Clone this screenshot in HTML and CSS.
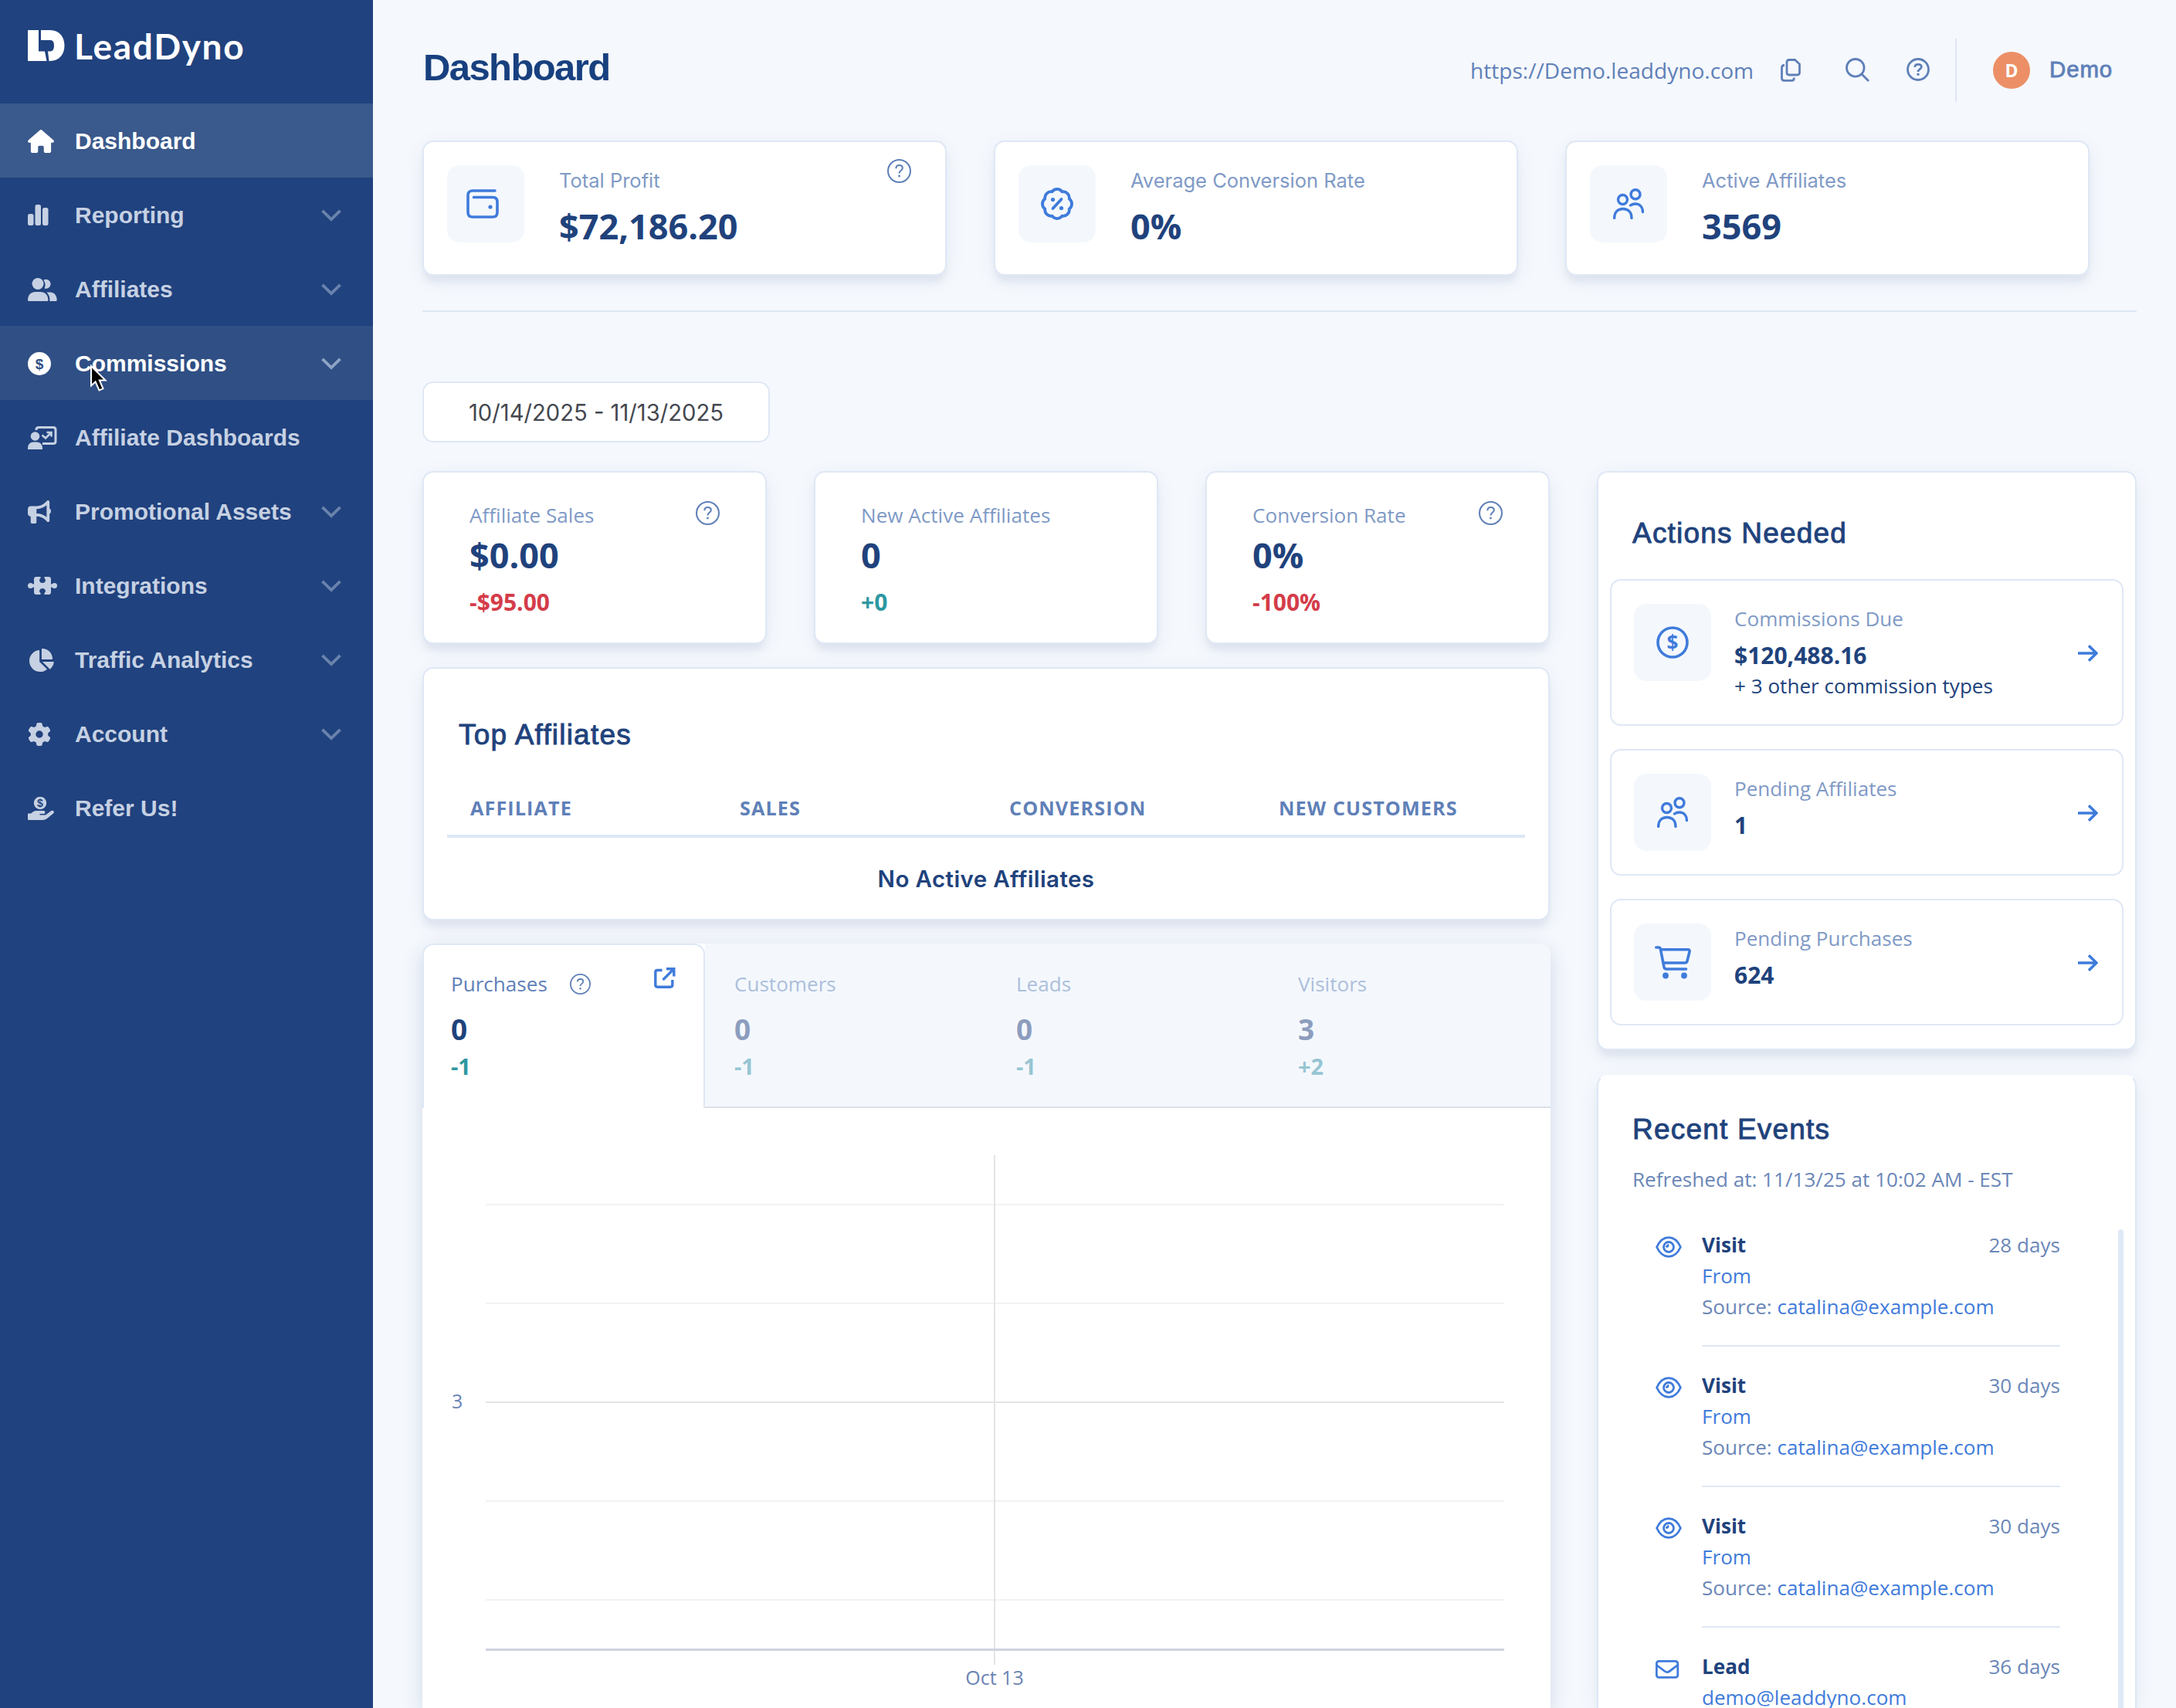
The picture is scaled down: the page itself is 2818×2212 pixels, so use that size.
FILE: index.html
```
<!DOCTYPE html>
<html lang="en">
<head>
    <meta charset="UTF-8">
    <title>LeadDyno - Dashboard</title>
    <link rel="stylesheet" href="styles.css">
</head>
<body>
    <!-- shared icons -->
    <svg class="sprite">
        <symbol id="help" viewBox="0 0 30 30">
            <circle cx="15" cy="15" r="14" fill="none" stroke="currentColor" stroke-width="2"/>
            <path d="M11 11.800C11 9 12.800 7.800 15 7.800C17.500 7.800 19.200 9.200 19.200 11.300C19.200 14.300 15 14.300 15 17.800" fill="none" stroke="currentColor" stroke-width="2"/>
            <circle cx="15" cy="21.300" r="1.400" fill="currentColor"/>
        </symbol>
        <symbol id="chevron" viewBox="0 0 26 16">
            <path d="M1.500 1.800L13 13L24.500 1.800" fill="none" stroke="currentColor" stroke-width="3.800"/>
        </symbol>
        <symbol id="people" viewBox="0 0 40 40">
            <g fill="none" stroke="currentColor" stroke-width="3.400" stroke-linecap="round">
                <circle cx="29" cy="7.700" r="6"/>
                <circle cx="12.500" cy="14.500" r="6"/>
                <path d="M1.600 38.400C1.600 31 6 26.500 12.800 26.500S24 31 24 38.400"/>
                <path d="M22.500 22C24.500 20.500 26.500 20 28.800 20C35 20 38.400 24.500 38.400 30.500"/>
            </g>
        </symbol>
        <symbol id="arrow" viewBox="0 0 26 22">
            <path d="M0 11H24M14 1.300L24 11L14 20.700" fill="none" stroke="currentColor" stroke-width="3.600"/>
        </symbol>
        <symbol id="eye" viewBox="0 0 34 28">
            <g fill="none" stroke="currentColor" stroke-width="2.800">
                <path d="M1.600 14C5 6.500 10.500 1.600 17 1.600S29 6.500 32.400 14C29 21.500 23.500 26.400 17 26.400S5 21.500 1.600 14Z"/>
                <circle cx="17" cy="14" r="6.500"/>
            </g>
            <path d="M12.500 13.500L16.500 9.500L17.500 11.500A3.500 3.500 0 0 1 14.500 15Z" fill="currentColor"/>
        </symbol>
    </svg>

    <aside class="sidebar">
        <div class="logo">
            <svg width="48" height="40" viewBox="0 0 48 40" fill="#fff">
                <path d="M0 0H14V27.500H22L24.500 40H0Z"/>
                <path d="M17 0H29C40.500 0 47.500 8.500 47.500 20S40.500 40 29 40H27.500L26 27.500H29C32.500 27.500 34 24.500 34 20S32.500 13 29 13H17Z"/>
            </svg>
            <span>LeadDyno</span>
        </div>
        <nav>
            <a class="item active">
                <svg width="34" height="30" viewBox="0 0 576 512" fill="currentColor"><path d="M575.8 255.500c0 18-15 32.100-32 32.100h-32l.7 160.200c0 2.700-.2 5.400-.5 8.100V472c0 22.100-17.900 40-40 40H392c-22.100 0-40-17.900-40-40V384c0-17.700-14.300-32-32-32H256c-17.700 0-32 14.300-32 32v88c0 22.100-17.900 40-40 40H104c-22.100 0-40-17.900-40-40V287.600H32c-18 0-32-14-32-32.100c0-9 3-17 10-24L266.400 8c7-7 15-8 22-8s15 2 21 7L564.800 231.500c8 7 12 15 11 24z"/></svg>
                <span>Dashboard</span>
            </a>
            <a class="item">
                <svg width="27" height="27" viewBox="0 0 27 27" fill="currentColor"><rect x="0" y="12" width="7.500" height="15" rx="2.500"/><rect x="9.500" y="0" width="7.500" height="27" rx="2.500"/><rect x="19" y="4" width="7.500" height="23" rx="2.500"/></svg>
                <span>Reporting</span>
                <svg class="chev"><use href="#chevron"/></svg>
            </a>
            <a class="item">
                <svg width="38" height="30" viewBox="0 0 38 30" fill="currentColor"><circle cx="13" cy="7.500" r="7.500"/><path d="M0 28.500C0 22 4.500 18 10 18H16C22 18 26.300 22 26.300 28.500Q26.300 30 25 30H1.300Q0 30 0 28.500Z"/><path d="M20.500 2.700A6 6 0 1 1 21.500 13.500Q24.200 8 20.500 2.700Z"/><path d="M24.500 18.500H29C34 18.500 37.700 22.500 37.700 28.500Q37.700 30 36.300 30H28.300C29 25.500 27.500 21.500 24.500 18.500Z"/></svg>
                <span>Affiliates</span>
                <svg class="chev"><use href="#chevron"/></svg>
            </a>
            <a class="item hover">
                <svg width="30" height="30" viewBox="0 0 30 30"><circle cx="15" cy="15" r="15" fill="currentColor"/><text x="15" y="21.500" text-anchor="middle" class="coin-mark hovered">$</text></svg>
                <span>Commissions</span>
                <svg class="chev"><use href="#chevron"/></svg>
            </a>
            <a class="item">
                <svg width="38" height="30" viewBox="0 0 38 30" fill="currentColor"><circle cx="9.500" cy="13" r="5.800"/><path d="M0 28.500C0 23.500 3 20.500 7.500 20.500H11.500C16 20.500 19 23.500 19 28.500V30H0Z"/><path d="M11 5V4.500Q11 1.500 14 1.500H33Q36 1.500 36 4.500V19.500Q36 22.500 33 22.500H19" fill="none" stroke="currentColor" stroke-width="3"/><path d="M18.500 11.500L23 15.500L29.500 9M24.500 8H30.500V13.500" fill="none" stroke="currentColor" stroke-width="2.600"/></svg>
                <span>Affiliate Dashboards</span>
            </a>
            <a class="item">
                <svg width="30" height="30" viewBox="0 0 512 512" fill="currentColor"><path d="M480 32c0-12.900-7.800-24.600-19.800-29.600s-25.700-2.200-34.900 6.900L381.700 53c-48 48-113.100 75-181 75H64c-35.300 0-64 28.700-64 64v96c0 35.300 28.700 64 64 64v128c0 17.700 14.300 32 32 32h64c17.700 0 32-14.300 32-32V352h8.700c67.900 0 133 27 181 75l43.600 43.600c9.200 9.200 22.900 11.900 34.900 6.900s19.800-16.600 19.800-29.600V300.400c18.600-8.800 32-32.500 32-60.400s-13.400-51.600-32-60.400V32zm-64 76.700V371.300C357.200 317.800 280.500 288 200.700 288H192V192h8.700c79.800 0 156.500-29.800 215.300-83.300z"/></svg>
                <span>Promotional Assets</span>
                <svg class="chev"><use href="#chevron"/></svg>
            </a>
            <a class="item">
                <svg width="38" height="23" viewBox="0 0 38 23" fill="currentColor"><circle cx="3.500" cy="11.500" r="3.500"/><circle cx="34.500" cy="11.500" r="3.500"/><path d="M3 9.500H8V3Q8 0 11 0H16.500V2Q14.500 3.300 15.200 5.500Q16 8 19 8T22.800 5.500Q23.500 3.300 21.500 2V0H27Q30 0 30 3V9.500H35V13.500H30V20Q30 23 27 23H21.500V21Q23.500 19.700 22.800 17.500Q22 15 19 15T15.200 17.500Q14.500 19.700 16.500 21V23H11Q8 23 8 20V13.500H3Z"/></svg>
                <span>Integrations</span>
                <svg class="chev"><use href="#chevron"/></svg>
            </a>
            <a class="item">
                <svg width="34" height="30" viewBox="0 0 576 512" fill="currentColor"><path d="M304 240V16.600c0-9 7-16.600 16-16.600C443.700 0 544 100.300 544 224c0 9-7.600 16-16.600 16H304zM32 272C32 150.700 122.100 50.300 239 34.300c9.200-1.300 17 6.100 17 15.400V288L412.500 444.500c6.700 6.700 6.200 17.700-1.500 23.100C371.800 495.600 323.800 512 272 512C139.500 512 32 404.600 32 272zm526.400 16c9.300 0 16.600 7.800 15.400 17c-7.700 55.900-34.600 105.600-73.900 142.300c-6 5.600-15.400 5.200-21.200-.7L320 288H558.400z"/></svg>
                <span>Traffic Analytics</span>
                <svg class="chev"><use href="#chevron"/></svg>
            </a>
            <a class="item">
                <svg width="30" height="30" viewBox="0 0 512 512" fill="currentColor"><path d="M495.900 166.600c3.200 8.700 .5 18.400-6.400 24.600l-43.300 39.400c1.100 8.300 1.700 16.800 1.700 25.400s-.6 17.100-1.700 25.400l43.300 39.400c6.900 6.200 9.600 15.900 6.400 24.600c-4.400 11.900-9.700 23.300-15.800 34.300l-4.700 8.100c-6.600 11-14 21.400-22.100 31.200c-5.900 7.200-15.700 9.600-24.500 6.800l-55.700-17.700c-13.400 10.300-28.200 18.900-44 25.400l-12.500 57.100c-2 9.100-9 16.300-18.200 17.800c-13.800 2.300-28 3.500-42.500 3.500s-28.700-1.200-42.500-3.500c-9.200-1.500-16.200-8.700-18.200-17.800l-12.500-57.100c-15.800-6.500-30.600-15.100-44-25.400L83.100 425.900c-8.800 2.800-18.600 .3-24.500-6.800c-8.100-9.800-15.500-20.200-22.100-31.200l-4.700-8.100c-6.100-11-11.400-22.400-15.800-34.300c-3.200-8.700-.5-18.400 6.400-24.600l43.300-39.400C64.600 273.100 64 264.600 64 256s.6-17.100 1.700-25.400L22.400 191.200c-6.900-6.200-9.600-15.900-6.400-24.600c4.400-11.900 9.700-23.300 15.800-34.300l4.700-8.100c6.600-11 14-21.400 22.100-31.200c5.900-7.200 15.700-9.600 24.500-6.800l55.700 17.700c13.400-10.300 28.200-18.900 44-25.400l12.500-57.100c2-9.100 9-16.300 18.200-17.800C227.300 1.200 241.500 0 256 0s28.700 1.200 42.500 3.500c9.200 1.500 16.200 8.700 18.200 17.800l12.500 57.100c15.800 6.500 30.600 15.100 44 25.400l55.700-17.700c8.800-2.800 18.600-.3 24.500 6.800c8.100 9.800 15.500 20.200 22.100 31.200l4.700 8.100c6.100 11 11.400 22.400 15.800 34.300zM256 336a80 80 0 1 0 0-160 80 80 0 1 0 0 160z"/></svg>
                <span>Account</span>
                <svg class="chev"><use href="#chevron"/></svg>
            </a>
            <a class="item">
                <svg width="34" height="30" viewBox="0 0 34 30" fill="currentColor"><circle cx="16" cy="8" r="8.200"/><path d="M1 21.500H4L7 19.300Q8.800 18 11 18H20.500Q22.500 18 22.500 20T20.500 22H15.500V23.400H23L30 18.300Q32.200 16.900 33.500 18.500Q34.500 20.300 32.800 21.700L25 28Q22.500 30 19.500 30H1Q0 30 0 29V22.500Q0 21.500 1 21.500Z"/><text x="16" y="13" text-anchor="middle" class="coin-mark small">$</text></svg>
                <span>Refer Us!</span>
            </a>
        </nav>
        <svg class="cursor" width="24" height="38" viewBox="0 0 24 38"><path d="M2 2V27.500L7.600 22.500L12.500 33.500L17.500 31.300L12.800 20.500H20.500Z" fill="#000" stroke="#fff" stroke-width="2"/></svg>
    </aside>

    <main>
        <header class="topbar">
            <h1>Dashboard</h1>
            <span class="url">https://Demo.leaddyno.com</span>
            <svg class="copy" width="26" height="30" viewBox="0 0 26 30" fill="none" stroke="currentColor" stroke-width="2.800"><path d="M11 1.500H18.500L24.500 7V18Q24.500 21 21.500 21H11Q8 21 8 18V4.500Q8 1.500 11 1.500Z"/><path d="M5 8.500H4.500Q1.500 8.500 1.500 11.500V25Q1.500 28.300 4.500 28.300H14.500Q17.300 28.300 17.300 25.500V24.500"/></svg>
            <svg class="search" width="31" height="31" viewBox="0 0 31 31" fill="none" stroke="currentColor" stroke-width="2.800"><circle cx="12.800" cy="12.800" r="11.300"/><path d="M21 21L30 30"/></svg>
            <svg class="top-help" width="30" height="30" viewBox="0 0 30 30" fill="none" stroke="currentColor" stroke-width="2.800"><circle cx="15" cy="15" r="13.500"/><path d="M10.800 12C10.800 9.300 12.500 8.300 15 8.300S19.400 9.500 19.400 11.800C19.400 14.300 15 14.500 15 18"/><circle cx="15" cy="21.300" r="1.700" fill="currentColor" stroke="none"/></svg>
            <span class="sep"></span>
            <span class="avatar">D</span>
            <span class="user">Demo</span>
        </header>

        <section class="stats">
            <div class="card stat">
                <div class="icon-box wallet">
                    <svg width="42" height="38" viewBox="0 0 42 38" fill="none" stroke="currentColor" stroke-width="3.600" stroke-linecap="round"><path d="M37 2H8Q2 2 2 8V30Q2 36 8 36H34Q40 36 40 30V16.500Q40 10.500 34 10.500H9.500"/><circle cx="31" cy="23" r="2.600" fill="currentColor" stroke="none"/></svg>
                </div>
                <div>
                    <div class="stat-label">Total Profit</div>
                    <div class="value">$72,186.20</div>
                </div>
                <svg class="help"><use href="#help"/></svg>
            </div>
            <div class="card stat">
                <div class="icon-box">
                    <svg width="42" height="42" viewBox="0 0 42 42" fill="none" stroke="currentColor" stroke-width="3.800" stroke-linejoin="round" stroke-linecap="round"><path d="M36.700 27.500A8 8 0 0 1 27.500 36.700A8 8 0 0 1 14.500 36.700A8 8 0 0 1 5.300 27.500A8 8 0 0 1 5.300 14.500A8 8 0 0 1 14.500 5.300A8 8 0 0 1 27.500 5.300A8 8 0 0 1 36.700 14.500A8 8 0 0 1 36.700 27.500Z"/><path d="M26.500 15L15.500 27"/><circle cx="15.500" cy="15.500" r="2.600" fill="currentColor" stroke="none"/><circle cx="26.500" cy="26.500" r="2.600" fill="currentColor" stroke="none"/></svg>
                </div>
                <div>
                    <div class="stat-label">Average Conversion Rate</div>
                    <div class="value">0%</div>
                </div>
            </div>
            <div class="card stat">
                <div class="icon-box"><svg width="40" height="40"><use href="#people"/></svg></div>
                <div>
                    <div class="stat-label">Active Affiliates</div>
                    <div class="value">3569</div>
                </div>
            </div>
        </section>

        <hr>

        <div class="date-range">10/14/2025 - 11/13/2025</div>

        <div class="columns">
            <div class="left">
                <section class="metrics">
                    <div class="card metric">
                        <div class="metric-top"><span class="label">Affiliate Sales</span><svg class="help"><use href="#help"/></svg></div>
                        <div class="value">$0.00</div>
                        <div class="delta down">-$95.00</div>
                    </div>
                    <div class="card metric">
                        <div class="metric-top"><span class="label">New Active Affiliates</span></div>
                        <div class="value">0</div>
                        <div class="delta up">+0</div>
                    </div>
                    <div class="card metric">
                        <div class="metric-top"><span class="label">Conversion Rate</span><svg class="help"><use href="#help"/></svg></div>
                        <div class="value">0%</div>
                        <div class="delta down">-100%</div>
                    </div>
                </section>

                <section class="card top-affiliates">
                    <h2>Top Affiliates</h2>
                    <div class="table-head">
                        <span>Affiliate</span>
                        <span>Sales</span>
                        <span>Conversion</span>
                        <span>New Customers</span>
                    </div>
                    <div class="empty">No Active Affiliates</div>
                </section>

                <section class="chart-card">
                    <div class="tabs">
                        <div class="tab selected">
                            <div class="tab-top">
                                <span>Purchases</span>
                                <svg class="help small"><use href="#help"/></svg>
                                <svg class="open" width="28" height="27" viewBox="0 0 28 27" fill="none" stroke="currentColor" stroke-width="3.400"><path d="M10.500 3.500H4.500Q1.800 3.500 1.800 6.200V22.500Q1.800 25.200 4.500 25.200H21Q23.800 25.200 23.800 22.500V16"/><path d="M16 1.800H25.800V11.500M25.500 2L11.500 16"/></svg>
                            </div>
                            <div class="tab-value">0</div>
                            <div class="tab-delta">-1</div>
                        </div>
                        <div class="tab">
                            <div class="tab-top"><span>Customers</span></div>
                            <div class="tab-value">0</div>
                            <div class="tab-delta">-1</div>
                        </div>
                        <div class="tab">
                            <div class="tab-top"><span>Leads</span></div>
                            <div class="tab-value">0</div>
                            <div class="tab-delta">-1</div>
                        </div>
                        <div class="tab">
                            <div class="tab-top"><span>Visitors</span></div>
                            <div class="tab-value">3</div>
                            <div class="tab-delta">+2</div>
                        </div>
                    </div>
                    <svg class="chart" width="1461" height="777" viewBox="0 0 1461 777">
                        <g fill="#f2f2f2">
                            <rect x="82" y="124" width="1319" height="2"/>
                            <rect x="82" y="252" width="1319" height="2"/>
                            <rect x="82" y="508" width="1319" height="2"/>
                            <rect x="82" y="636" width="1319" height="2"/>
                        </g>
                        <rect x="82" y="380" width="1319" height="2" fill="#e4e4e6"/>
                        <rect x="740" y="61" width="2" height="660" fill="#e4e4e8"/>
                        <rect x="82" y="700" width="1319" height="3" fill="#cdd3e0"/>
                        <text x="38" y="389">3</text>
                        <text x="741" y="747" text-anchor="middle">Oct 13</text>
                    </svg>
                </section>
            </div>

            <div class="right">
                <section class="card actions">
                    <h2>Actions Needed</h2>
                    <div class="action">
                        <div class="icon-box">
                            <svg width="42" height="42" viewBox="0 0 42 42"><circle cx="21" cy="21" r="19" fill="none" stroke="currentColor" stroke-width="3.600"/><text x="21" y="30.500" text-anchor="middle" class="dollar-mark">$</text></svg>
                        </div>
                        <div class="action-text">
                            <div class="label">Commissions Due</div>
                            <div class="amount">$120,488.16</div>
                            <div class="note">+ 3 other commission types</div>
                        </div>
                        <svg class="arrow"><use href="#arrow"/></svg>
                    </div>
                    <div class="action">
                        <div class="icon-box"><svg width="40" height="40"><use href="#people"/></svg></div>
                        <div class="action-text">
                            <div class="label">Pending Affiliates</div>
                            <div class="amount">1</div>
                        </div>
                        <svg class="arrow"><use href="#arrow"/></svg>
                    </div>
                    <div class="action">
                        <div class="icon-box">
                            <svg width="47" height="43" viewBox="0 0 47 43" fill="none" stroke="currentColor" stroke-width="3.600" stroke-linecap="round" stroke-linejoin="round"><path d="M1.800 2H5.500Q7 2 7.500 4.500L12 27.500Q12.500 30 15 30H40.500"/><path d="M7.500 4.800H43Q45.500 4.800 45 7.500L42 19.500Q41.300 22 39 22H11.500"/><circle cx="14" cy="38.500" r="3.900" fill="currentColor" stroke="none"/><circle cx="38" cy="38.500" r="3.900" fill="currentColor" stroke="none"/></svg>
                        </div>
                        <div class="action-text">
                            <div class="label">Pending Purchases</div>
                            <div class="amount">624</div>
                        </div>
                        <svg class="arrow"><use href="#arrow"/></svg>
                    </div>
                </section>

                <section class="card events">
                    <h2>Recent Events</h2>
                    <div class="refreshed">Refreshed at: 11/13/25 at 10:02 AM - EST</div>
                    <div class="event-scroll">
                        <div class="event-list">
                            <div class="event">
                                <svg width="34" height="28"><use href="#eye"/></svg>
                                <div class="event-body">
                                    <div class="event-title"><b>Visit</b><span>28 days</span></div>
                                    <a>From</a>
                                    <div>Source: <a>catalina@example.com</a></div>
                                </div>
                            </div>
                            <div class="event">
                                <svg width="34" height="28"><use href="#eye"/></svg>
                                <div class="event-body">
                                    <div class="event-title"><b>Visit</b><span>30 days</span></div>
                                    <a>From</a>
                                    <div>Source: <a>catalina@example.com</a></div>
                                </div>
                            </div>
                            <div class="event">
                                <svg width="34" height="28"><use href="#eye"/></svg>
                                <div class="event-body">
                                    <div class="event-title"><b>Visit</b><span>30 days</span></div>
                                    <a>From</a>
                                    <div>Source: <a>catalina@example.com</a></div>
                                </div>
                            </div>
                            <div class="event last">
                                <svg width="34" height="28" viewBox="0 0 34 28" fill="none" stroke="currentColor" stroke-width="2.800"><rect x="1.300" y="4.300" width="27.500" height="21" rx="3"/><path d="M1.500 9.500L12 17.500Q15 19.700 18 17.500L28.500 9.500"/></svg>
                                <div class="event-body">
                                    <div class="event-title"><b>Lead</b><span>36 days</span></div>
                                    <a>demo@leaddyno.com</a>
                                </div>
                            </div>
                        </div>
                        <div class="scrollbar"></div>
                    </div>
                </section>
            </div>
        </div>
    </main>
</body>
</html>
```
FILE: styles.css
```
* {
    box-sizing: border-box;
}

body {
    margin: 0;
    display: flex;
    width: 2818px;
    height: 2212px;
    overflow: hidden;
    background-color: #f5f8fd;
    color: #20427c;
    font-family: "Open Sans", "Noto Sans", sans-serif;
    font-size: 26.1px;
}

svg {
    display: block;
    flex-shrink: 0;
}

.sprite {
    display: none;
}

/* sidebar */
.sidebar {
    position: relative;
    flex: 0 0 483px;
    height: 2212px;
    background-color: #20427e;
}

.logo {
    display: flex;
    align-items: center;
    height: 134px;
    padding: 0 0 16px 36px;
    color: #fff;
    font-family: Lato, sans-serif;
    font-size: 46px;
    font-weight: 700;
}

.logo span {
    margin-left: 12px;
    letter-spacing: 1.7px;
}

.item {
    display: grid;
    grid-template-columns: 61px 1fr 26px;
    align-items: center;
    height: 96px;
    padding: 1px 41px 0 36px;
    color: #c6d1e3;
    font-family: "Liberation Sans", Arial, sans-serif;
    font-size: 30px;
    font-weight: 700;
}

.active {
    background-color: #3a598c;
    color: #fff;
}

.hover {
    background-color: #2f4f85;
    color: #fff;
}

.chev {
    width: 26px;
    height: 16px;
    margin-top: 1px;
    color: #6a83ad;
}

.hover .chev {
    color: #8fa3c4;
}

.cursor {
    position: absolute;
    left: 116px;
    top: 472px;
}

.coin-mark {
    fill: #20427e;
    font-size: 19px;
    font-weight: 700;
}

.coin-mark.hovered {
    fill: #2f4f85;
}

.coin-mark.small {
    font-size: 14px;
}

/* main area */
main {
    width: 2335px;
    height: 2212px;
    padding: 0 51px 0 64px;
}

.topbar {
    display: flex;
    align-items: center;
    height: 182px;
    color: #5f80b8;
}

h1 {
    margin: 0 auto 9px 1px;
    color: #18407f;
    font-family: "Liberation Sans", Arial, sans-serif;
    font-size: 49px;
    font-weight: 700;
    letter-spacing: -1.6px;
}

.url {
    margin-bottom: 1px;
    font-size: 28.1px;
}

.copy {
    margin-left: 35px;
}

.search {
    margin-left: 58px;
    margin-bottom: 2px;
}

.top-help {
    margin-left: 48px;
    margin-bottom: 2px;
}

.sep {
    width: 2px;
    height: 82px;
    margin-left: 33px;
    background-color: #dfe6f3;
}

.avatar {
    width: 48px;
    height: 48px;
    margin-left: 47px;
    border-radius: 50%;
    background-color: #ec8f66;
    color: #fff;
    font-size: 23px;
    font-weight: 700;
    line-height: 48px;
    text-align: center;
}

.user {
    margin: 0 31px 2px 25px;
    font-family: "Liberation Sans", Arial, sans-serif;
    font-size: 29.5px;
    letter-spacing: 0.8px;
    -webkit-text-stroke: 0.8px #5f80b8;
}

.card {
    background-color: #fff;
    border: 2px solid #dfe8f5;
    border-radius: 14px;
    box-shadow: 0 10px 10px -2px rgba(32, 66, 126, 0.08), 0 6px 28px rgba(32, 66, 126, 0.06);
}

.stats {
    display: flex;
    gap: 61px;
}

.stat {
    display: flex;
    width: 679px;
    height: 175px;
    padding: 30px;
}

.icon-box {
    display: flex;
    align-items: center;
    justify-content: center;
    flex: 0 0 100px;
    height: 100px;
    border-radius: 16px;
    background-color: #f4f8fd;
    color: #3f7bdb;
}

.icon-box.wallet {
    padding-right: 8px;
}

.stat .icon-box {
    margin-right: 45px;
}

.stat-label {
    margin: 2px 0 11px;
    color: #7f9ac6;
    font-family: Inter, sans-serif;
    font-size: 25.5px;
    line-height: 36px;
}

.value {
    font-size: 45px;
    font-weight: 700;
    line-height: 60px;
}

.help {
    width: 31px;
    height: 31px;
    color: #5f80b8;
}

.stat .help {
    margin: -8px 14px 0 auto;
}

hr {
    height: 2px;
    margin: 45px 0 90px;
    border: 0;
    background-color: #dde6f4;
}

.date-range {
    width: 450px;
    height: 79px;
    margin-bottom: 37px;
    border: 2px solid #dfe8f5;
    border-radius: 14px;
    background-color: #fff;
    color: #44484f;
    font-family: Inter, sans-serif;
    font-size: 29.2px;
    line-height: 77px;
    text-align: center;
}

.columns {
    display: flex;
    gap: 61px;
}

.left {
    width: 1460px;
}

.right {
    width: 699px;
}

.metrics {
    display: flex;
    gap: 61px;
}

.metric {
    flex: 1;
    height: 224px;
    padding: 37px 59px 0;
}

.metric-top {
    display: flex;
    justify-content: space-between;
    height: 40px;
}

.label {
    color: #7f9ac6;
    line-height: 36px;
}

.delta {
    margin-top: 11px;
    font-size: 30px;
    font-weight: 700;
    line-height: 40px;
}

.down {
    color: #d43c49;
}

.up {
    color: #2e98a2;
}

h2 {
    margin: 0;
    font-family: "Liberation Sans", Arial, sans-serif;
    font-size: 37px;
    font-weight: 400;
    line-height: 50px;
    letter-spacing: 1.2px;
    -webkit-text-stroke: 0.9px #20427c;
}

.top-affiliates {
    height: 328px;
    margin-top: 30px;
    padding: 61px 30px 0;
}

.top-affiliates h2 {
    padding-left: 15px;
}

.table-head {
    display: grid;
    grid-template-columns: repeat(4, 349px);
    width: 1396px;
    height: 59px;
    margin-top: 49px;
    border-bottom: 4px solid #dde8f5;
    color: #5f80b8;
    font-size: 25.2px;
    font-weight: 700;
    line-height: 40px;
    letter-spacing: 1.1px;
    text-transform: uppercase;
}

.table-head span {
    padding-left: 30px;
}

.empty {
    margin-top: 33px;
    font-family: Inter, sans-serif;
    font-size: 29.5px;
    font-weight: 600;
    line-height: 40px;
    letter-spacing: 0.4px;
    text-align: center;
}

/* chart */
.chart-card {
    width: 1461px;
    margin-top: 30px;
    border-radius: 14px 14px 0 0;
    background-color: #fff;
    box-shadow: 0 8px 26px rgba(32, 66, 126, 0.17);
}

.tabs {
    display: grid;
    grid-template-columns: 366px 365px 365px 365px;
    height: 213px;
}

.tab {
    padding: 34px 38px 0 38px;
    border-bottom: 2px solid #dbe0e8;
    background-color: #f4f8fd;
    color: #adbfdb;
}

.tab.selected {
    padding: 32px 36px 0 35px;
    border: 2px solid #dfe8f5;
    border-bottom: 0;
    border-radius: 14px 14px 0 0;
    background-color: #fff;
    color: #5f80b8;
}

.tab:last-child {
    border-top-right-radius: 14px;
}

.tab-top {
    display: flex;
    height: 52px;
    line-height: 36px;
}

.help.small {
    width: 27px;
    height: 27px;
    margin: 5px 0 0 29px;
}

.open {
    margin: -3px 0 0 auto;
    color: #3f7bdb;
}

.tab-value {
    color: #8c9dbd;
    font-size: 37px;
    font-weight: 700;
    line-height: 50px;
}

.tab-delta {
    margin-top: 3px;
    color: #97c5d3;
    font-size: 29px;
    font-weight: 700;
    line-height: 40px;
}

.selected .tab-value {
    color: #20427c;
}

.selected .tab-delta {
    color: #2e98a2;
}

.chart text {
    fill: #6b84b4;
    font-size: 25px;
}

/* actions */
.actions {
    height: 750px;
    padding: 54px 15px 0;
}

.actions h2 {
    margin-bottom: 34px;
    padding-left: 29px;
}

.action {
    display: flex;
    height: 164px;
    margin-bottom: 30px;
    padding: 30px 31px 0 29px;
    border: 2px solid #dfe8f5;
    border-radius: 14px;
}

.actions h2 + .action {
    height: 190px;
}

.action-text {
    margin: 1px 0 0 30px;
}

.amount {
    margin-top: 8px;
    font-size: 30px;
    font-weight: 700;
    line-height: 44px;
}

.note {
    line-height: 34px;
}

.arrow {
    align-self: center;
    width: 26px;
    height: 22px;
    margin: -29px 0 0 auto;
    color: #3f7bdb;
}

.dollar-mark {
    fill: currentColor;
    font-size: 26px;
    font-weight: 700;
}

/* events */
.events {
    height: 820px;
    margin-top: 32px;
    padding: 44px 15px 0 44px;
    border-top-color: #fff;
    border-bottom: 0;
    border-radius: 14px 14px 0 0;
}

.refreshed {
    margin-top: 19px;
    color: #6b87b8;
    line-height: 40px;
}

.event-scroll {
    display: flex;
    justify-content: space-between;
    margin-top: 45px;
}

.event-list {
    width: 524px;
    margin-left: 30px;
}

.event {
    display: flex;
    color: #3f7bdb;
}

.event > svg {
    margin-top: 9px;
}

.event-body {
    width: 464px;
    height: 152px;
    margin: 0 0 30px auto;
    border-bottom: 2px solid #dfe8f5;
    color: #6b87b8;
    line-height: 40px;
}

.event-body > a {
    display: block;
}

.event.last .event-body {
    height: 74px;
    margin-bottom: 0;
    border: 0;
}

.event a {
    color: #3f7bdb;
}

.event-title {
    display: flex;
    justify-content: space-between;
}

.event-title b {
    color: #20427c;
}

.scrollbar {
    width: 7px;
    border-radius: 4px 4px 0 0;
    background-color: #dfe9f6;
}
```
